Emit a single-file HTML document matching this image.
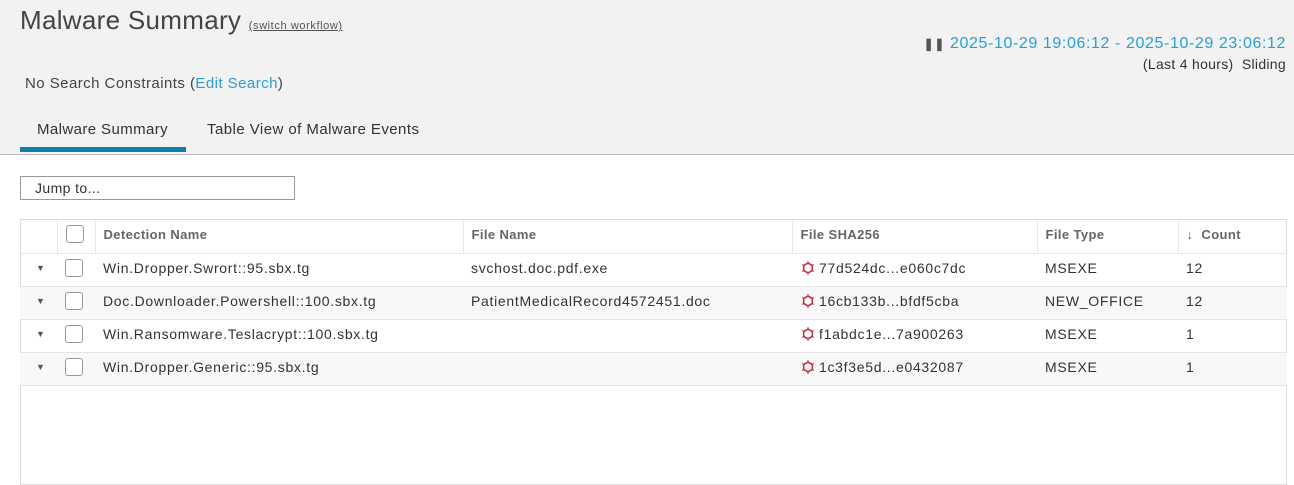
<!DOCTYPE html>
<html><head><style>
*{margin:0;padding:0;box-sizing:border-box}
body{width:1294px;height:485px;background:#fff;font-family:"Liberation Sans",sans-serif;color:#333;position:relative;overflow:hidden}
.hdr{position:absolute;left:0;top:0;width:1294px;height:155px;background:#f2f2f2;border-bottom:1px solid #bbb}
.abs{position:absolute;white-space:nowrap}
h1{font-weight:normal;font-size:26px;color:#444;letter-spacing:0.3px}
.blue{color:#2a9fd6}
table{position:absolute;left:20px;top:219px;width:1267px;border-collapse:collapse;font-size:14px;table-layout:fixed}
td,th{height:33px;border-bottom:1px solid #e6e6e6;text-align:left;padding-left:8px;white-space:nowrap;padding-bottom:3px}
td{letter-spacing:0.7px}
th{font-size:13px;color:#666;border-left:1px solid #e6e6e6;height:34px;letter-spacing:0.4px}
th:first-child{border-left:none}
tr.g td{background:#f8f8f8}
.frame{position:absolute;left:20px;top:219px;width:1267px;height:266px;border:1px solid #ddd}
.cb{display:inline-block;width:18px;height:18px;border:1px solid #999;border-radius:3px;background:#fff;vertical-align:middle}
.ic{display:inline-block;vertical-align:middle;margin-right:3px;margin-top:-2px}
</style></head><body>
<div class="hdr"></div>
<h1 class="abs" style="left:20px;top:5px">Malware Summary <span style="font-size:11px;text-decoration:underline;color:#555;letter-spacing:0.6px">(switch workflow)</span></h1>
<div class="abs" style="right:8px;top:35px;font-size:16px;text-align:right;letter-spacing:0.6px"><span style="color:#555;font-size:12px;font-weight:bold">❚❚</span> <span class="blue">2025-10-29 19:06:12 - 2025-10-29 23:06:12</span></div>
<div class="abs" style="right:8px;top:56px;font-size:14px;color:#333;letter-spacing:0.3px">(Last 4 hours)&nbsp; Sliding</div>
<div class="abs" style="left:25px;top:75px;font-size:15px;color:#444;letter-spacing:0.45px">No Search Constraints (<span class="blue">Edit Search</span>)</div>
<div class="abs" style="left:37px;top:121px;font-size:15px;color:#333;letter-spacing:0.4px">Malware Summary</div>
<div class="abs" style="left:207px;top:121px;font-size:15px;color:#333;letter-spacing:0.45px">Table View of Malware Events</div>
<div class="abs" style="left:20px;top:147px;width:166px;height:5px;background:#0d7fa8"></div>
<div class="abs" style="left:20px;top:176px;width:275px;height:24px;border:1px solid #999;background:#fff;font-size:14px;padding:3px 0 0 14px;letter-spacing:0.4px">Jump to...</div>
<div class="frame"></div>
<table>
<colgroup><col style="width:37px"><col style="width:38px"><col style="width:368px"><col style="width:329px"><col style="width:245px"><col style="width:141px"><col></colgroup>
<tr><th></th><th><span class="cb"></span></th><th>Detection Name</th><th>File Name</th><th>File SHA256</th><th>File Type</th><th>↓&nbsp; Count</th></tr>
<tr><td style="font-size:9px;color:#555;padding-left:16px">▼</td><td><span class="cb"></span></td><td>Win.Dropper.Swrort::95.sbx.tg</td><td>svchost.doc.pdf.exe</td><td><svg class="ic" width="16" height="16" viewBox="0 0 16 16"><polygon points="8,3 12.3,5.5 12.3,10.5 8,13 3.7,10.5 3.7,5.5" fill="none" stroke="#c0334d" stroke-width="1.6"/><path d="M8 1v2M14 4.5l-1.7 1M14 11.5l-1.7-1M8 15v-2M2 11.5l1.7-1M2 4.5l1.7 1" stroke="#c0334d" stroke-width="1"/></svg>77d524dc...e060c7dc</td><td>MSEXE</td><td>12</td></tr>
<tr class="g"><td style="font-size:9px;color:#555;padding-left:16px">▼</td><td><span class="cb"></span></td><td>Doc.Downloader.Powershell::100.sbx.tg</td><td>PatientMedicalRecord4572451.doc</td><td><svg class="ic" width="16" height="16" viewBox="0 0 16 16"><polygon points="8,3 12.3,5.5 12.3,10.5 8,13 3.7,10.5 3.7,5.5" fill="none" stroke="#c0334d" stroke-width="1.6"/><path d="M8 1v2M14 4.5l-1.7 1M14 11.5l-1.7-1M8 15v-2M2 11.5l1.7-1M2 4.5l1.7 1" stroke="#c0334d" stroke-width="1"/></svg>16cb133b...bfdf5cba</td><td>NEW_OFFICE</td><td>12</td></tr>
<tr><td style="font-size:9px;color:#555;padding-left:16px">▼</td><td><span class="cb"></span></td><td>Win.Ransomware.Teslacrypt::100.sbx.tg</td><td></td><td><svg class="ic" width="16" height="16" viewBox="0 0 16 16"><polygon points="8,3 12.3,5.5 12.3,10.5 8,13 3.7,10.5 3.7,5.5" fill="none" stroke="#c0334d" stroke-width="1.6"/><path d="M8 1v2M14 4.5l-1.7 1M14 11.5l-1.7-1M8 15v-2M2 11.5l1.7-1M2 4.5l1.7 1" stroke="#c0334d" stroke-width="1"/></svg>f1abdc1e...7a900263</td><td>MSEXE</td><td>1</td></tr>
<tr class="g"><td style="font-size:9px;color:#555;padding-left:16px">▼</td><td><span class="cb"></span></td><td>Win.Dropper.Generic::95.sbx.tg</td><td></td><td><svg class="ic" width="16" height="16" viewBox="0 0 16 16"><polygon points="8,3 12.3,5.5 12.3,10.5 8,13 3.7,10.5 3.7,5.5" fill="none" stroke="#c0334d" stroke-width="1.6"/><path d="M8 1v2M14 4.5l-1.7 1M14 11.5l-1.7-1M8 15v-2M2 11.5l1.7-1M2 4.5l1.7 1" stroke="#c0334d" stroke-width="1"/></svg>1c3f3e5d...e0432087</td><td>MSEXE</td><td>1</td></tr>
</table>
</body></html>
